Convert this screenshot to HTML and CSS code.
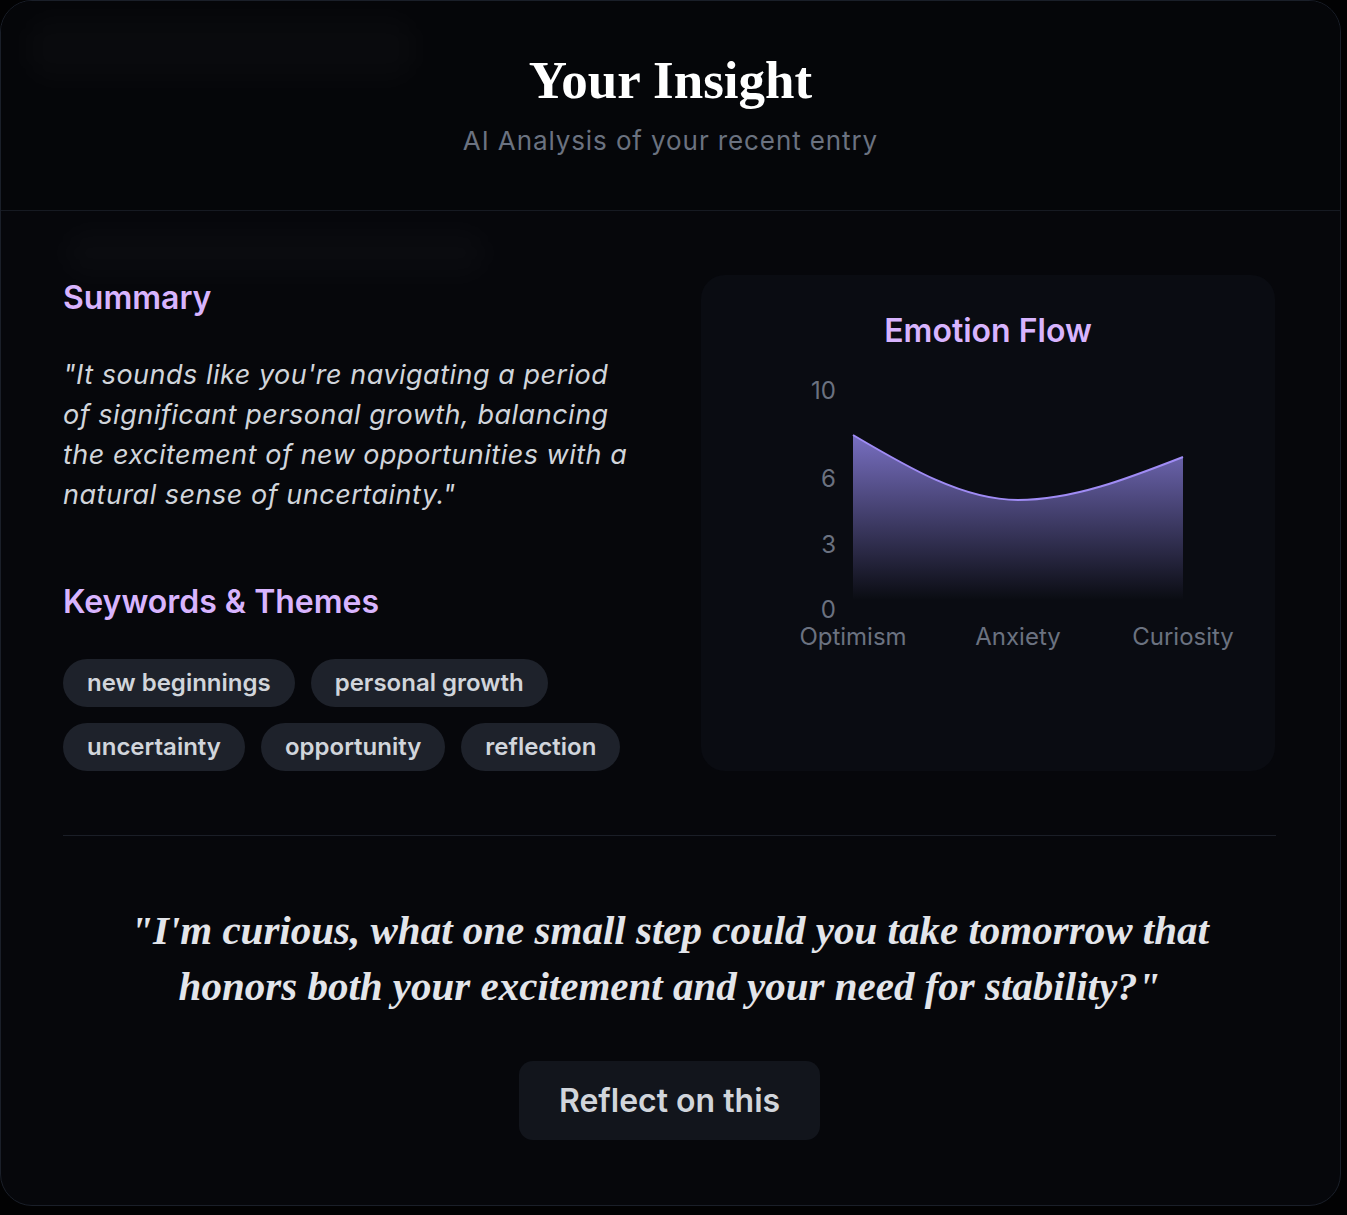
FILE: index.html
```html
<!DOCTYPE html>
<html lang="en">
<head>
<meta charset="utf-8">
<title>Your Insight</title>
<link rel="stylesheet" href="styles.css">
</head>
<body>
<div class="card">
  <div class="glow glow-a"></div>
  <div class="glow glow-b"></div>
  <header class="header">
    <h1 class="title">Your Insight</h1>
    <p class="subtitle">AI Analysis of your recent entry</p>
  </header>
  <main class="content">
    <div class="grid">
      <section class="left">
        <h2 class="section-title">Summary</h2>
        <p class="summary">"It sounds like you're navigating a period of significant personal growth, balancing the excitement of new opportunities with a natural sense of uncertainty."</p>
        <h2 class="section-title keywords-title">Keywords &amp; Themes</h2>
        <div class="tags">
          <span class="tag">new beginnings</span>
          <span class="tag">personal growth</span>
          <span class="tag">uncertainty</span>
          <span class="tag">opportunity</span>
          <span class="tag">reflection</span>
        </div>
      </section>
      <section class="chart-card">
        <h3 class="chart-title">Emotion Flow</h3>
        <svg class="chart" width="574" height="380" viewBox="0 74 574 380" xmlns="http://www.w3.org/2000/svg">
          <defs>
            <linearGradient id="fillGrad" x1="0" y1="0" x2="0" y2="1">
              <stop offset="0%" stop-color="#8b80e0" stop-opacity="0.85"/>
              <stop offset="100%" stop-color="#8b80e0" stop-opacity="0"/>
            </linearGradient>
          </defs>
          <path d="M152,160 C207,192.5 262,225 317,225 C372,225 427,203.5 482,182 L482,325 L152,325 Z" fill="url(#fillGrad)"/>
          <path d="M152,160 C207,192.5 262,225 317,225 C372,225 427,203.5 482,182" fill="none" stroke="#a08cf5" stroke-width="2"/>
          <g class="axis-y">
            <text x="135" y="124" text-anchor="end">10</text>
            <text x="135" y="212" text-anchor="end">6</text>
            <text x="135" y="278" text-anchor="end">3</text>
            <text x="135" y="343" text-anchor="end">0</text>
          </g>
          <g class="axis-x">
            <text x="152" y="370" text-anchor="middle">Optimism</text>
            <text x="317" y="370" text-anchor="middle">Anxiety</text>
            <text x="482" y="370" text-anchor="middle">Curiosity</text>
          </g>
        </svg>
      </section>
    </div>
    <hr class="divider">
    <p class="quote">"I'm curious, what one small step could you take tomorrow that honors both your excitement and your need for stability?"</p>
    <div class="actions">
      <button class="reflect-btn" type="button">Reflect on this</button>
    </div>
  </main>
</div>
</body>
</html>
```

FILE: styles.css
```css
* { box-sizing: border-box; }

html, body {
  margin: 0;
  padding: 0;
  background: #020203;
}

body {
  font-family: Inter, "Noto Sans", "Liberation Sans", sans-serif;
  color: #d1d5db;
}

.card {
  position: relative;
  width: 1341px;
  height: 1206px;
  border: 1px solid #1a1f29;
  border-radius: 32px;
  background: #06070b;
  overflow: hidden;
}

.glow {
  position: absolute;
  background: rgba(255, 255, 255, 0.02);
  filter: blur(14px);
  border-radius: 20px;
  pointer-events: none;
  z-index: 1;
}
.glow-a { left: 25px; top: 15px; width: 390px; height: 65px; }
.glow-b { left: 62px; top: 228px; width: 425px; height: 48px; }

.header {
  position: relative;
  text-align: center;
  padding: 49px 0 53px;
  border-bottom: 1px solid #161a22;
  background: #050609;
}

.title {
  margin: 0;
  font-family: "Liberation Serif", "DejaVu Serif", serif;
  font-weight: 700;
  font-size: 53px;
  line-height: 60px;
  color: #ffffff;
}

.subtitle {
  margin: 15px 0 0;
  font-size: 26px;
  line-height: 32px;
  letter-spacing: 0.9px;
  color: #6b7280;
}

.content {
  position: relative;
  padding: 64px 64px 64px 62px;
}

.grid {
  display: grid;
  grid-template-columns: 574px 574px;
  column-gap: 64px;
}

.left {
  padding-top: 5px;
}

.section-title {
  margin: 0;
  font-size: 32px;
  line-height: 36px;
  font-weight: 600;
  color: #d8b4fe;
}

.summary {
  margin: 39px 0 0;
  font-size: 27px;
  line-height: 40px;
  letter-spacing: 0.5px;
  font-style: italic;
  color: #d1d5db;
}

.keywords-title {
  margin-top: 69px;
}

.tags {
  display: flex;
  flex-wrap: wrap;
  gap: 16px;
  margin-top: 39px;
  max-width: 574px;
}

.tag {
  display: inline-block;
  padding: 12px 24px;
  font-size: 24px;
  line-height: 24px;
  font-weight: 600;
  color: #d1d5db;
  background: #1e222b;
  border-radius: 999px;
}

.chart-card {
  background: #0a0c12;
  border-radius: 24px;
  padding-top: 38px;
}

.chart-title {
  margin: 0;
  text-align: center;
  font-size: 32px;
  line-height: 36px;
  font-weight: 600;
  color: #d8b4fe;
}

.chart {
  display: block;
}

.chart text {
  font-family: Inter, "Noto Sans", sans-serif;
  font-size: 24px;
  fill: #6b7280;
}

.divider {
  margin: 64px 0 0;
  border: 0;
  height: 1px;
  background: #1a1e27;
}

.quote {
  margin: 66px auto 0;
  max-width: 1130px;
  text-align: center;
  font-family: "Liberation Serif", "DejaVu Serif", serif;
  font-weight: 700;
  font-style: italic;
  font-size: 41px;
  line-height: 56px;
  color: #e3e5ea;
}

.actions {
  display: flex;
  justify-content: center;
  margin-top: 47px;
}

.reflect-btn {
  font-family: Inter, "Noto Sans", sans-serif;
  font-size: 32px;
  line-height: 39px;
  font-weight: 600;
  color: #d1d5db;
  background: #12151c;
  border: 0;
  border-radius: 14px;
  padding: 20px 40px;
}
```
